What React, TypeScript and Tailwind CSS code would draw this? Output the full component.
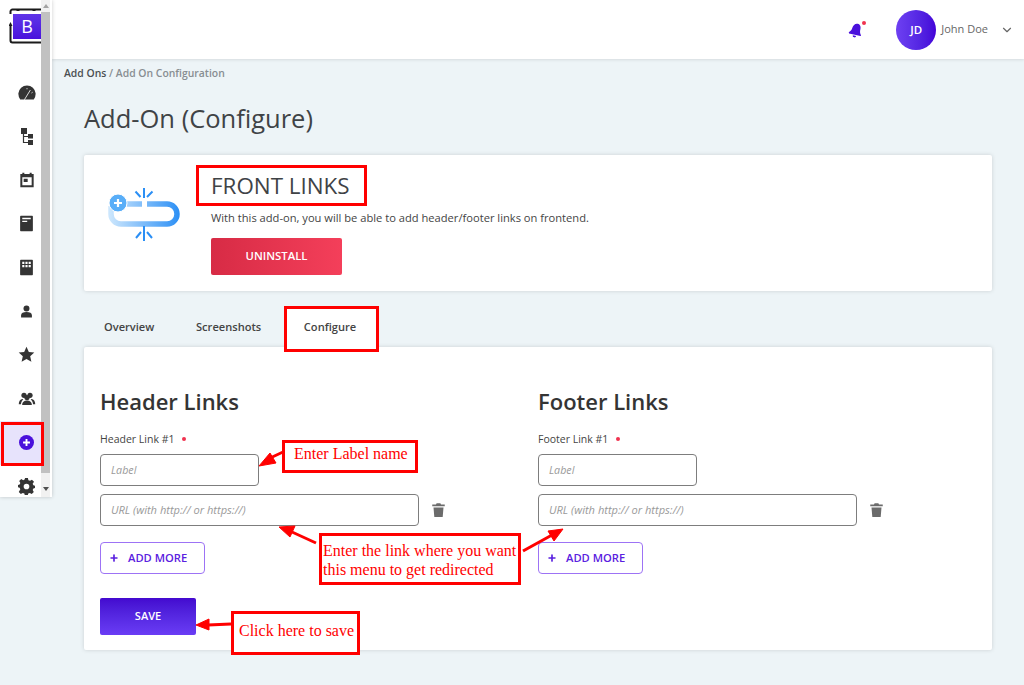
import { ChevronDown, Plus } from "lucide-react";
import { ReactNode } from "react";

const font = { fontFamily: '"Open Sans", sans-serif' };

function G({ children, size = 16, vb = "0 0 24 24", color = "#343434" }: { children: ReactNode; size?: number; vb?: string; color?: string }) {
  return (
    <svg width={size} height={size} viewBox={vb} fill={color}>
      {children}
    </svg>
  );
}

const navIcons: ReactNode[] = [
  <G size={18}>
    <path d="M3 20.500a11.500 11.500 0 1 1 18 0z" />
    <path d="M8.500 21L16.500 8M12 5.500V7M19.500 11l-1.500 1" stroke="#fff" strokeWidth="1.100" fill="none" />
  </G>,
  <svg width="12" height="17" viewBox="0 0 12 17" fill="#343434">
    <rect x="0" y="0" width="6" height="6" />
    <rect x="7" y="6" width="5" height="4.500" />
    <rect x="7" y="12" width="5" height="5" />
    <path d="M2.500 6v8.500h5M2.500 8.500h5" stroke="#343434" strokeWidth="1.200" fill="none" />
  </svg>,
  <G size={16}><path d="M5 1h3v2h8V1h3v2h3v20H2V3h3zM5 8v12h14V8zm2 2h6v5H7z" /></G>,
  <G size={17}><path d="M4 1h16a1 1 0 0 1 1 1v20a1 1 0 0 1-1 1H4a1 1 0 0 1-1-1V2a1 1 0 0 1 1-1zm2 3v2h12V4zm0 4v2h7V8z" /></G>,
  <G size={17}><path d="M4 1h16a1 1 0 0 1 1 1v20a1 1 0 0 1-1 1H4a1 1 0 0 1-1-1V2a1 1 0 0 1 1-1zm2 3v3h3V4zm4.500 0v3h3V4zM15 4v3h3V4zM6 8.500v3h3v-3zm4.500 0v3h3v-3zm4.500 0v3h3v-3z" /></G>,
  <G size={13}><circle cx="12" cy="6.500" r="5.500" /><path d="M2 23v-4c0-4 4-6 10-6s10 2 10 6v4z" /></G>,
  <G size={17}><path d="M12 1l3.300 7.300 7.700.8-5.800 5.300 1.700 7.800L12 18.200 5.100 22.200l1.700-7.800L1 9.100l7.700-.8z" /></G>,
  <G size={18}><circle cx="8" cy="7" r="3.500" /><circle cx="16" cy="7" r="3.500" /><circle cx="12" cy="10" r="3.500" /><path d="M1 19c0-4 2-7 5-7l1 .5c-2 1.500-3 4-3 6.500zM23 19c0-4-2-7-5-7l-1 .5c2 1.500 3 4 3 6.500zM5.500 20c0-4 2.500-6 6.500-6s6.500 2 6.500 6z" /></G>,
];

function Box({ className }: { className: string }) {
  return <div className={"absolute border-[3px] border-[#ff0000] " + className} />;
}

function Note({ className, children }: { className: string; children: ReactNode }) {
  return (
    <div
      className={"absolute border-[3px] border-[#ff0000] bg-white text-[#ff0000] text-[16px] leading-[19px] " + className}
      style={{ fontFamily: '"Liberation Serif", serif' }}
    >
      {children}
    </div>
  );
}

function Links({ title, label }: { title: string; label: string }) {
  return (
    <div className="w-[438px] shrink-0">
      <h2 className="text-[22px] leading-[32px] font-semibold text-[#343434]">{title}</h2>
      <div className="mt-[14px] flex items-center text-[10.500px] leading-[16px] text-[#444444]">
        {label}
        <span className="ml-[8px] h-[3.500px] w-[3.500px] rounded-full bg-[#f0324f]" />
      </div>
      <div className="mt-[7px] w-[159px] h-[32px] border border-[#7d7d7d] rounded-[4px] flex items-center px-[10px] text-[10.700px] italic text-[#9a9a9a]">Label</div>
      <div className="mt-[8px] flex items-center">
        <div className="w-[318.500px] h-[32px] border border-[#7d7d7d] rounded-[4px] flex items-center px-[10px] text-[11.100px] italic text-[#9a9a9a]">URL (with http:// or https://)</div>
        <svg className="ml-[12px]" width="15" height="16" viewBox="0 0 24 24" fill="#6b6b6b">
          <path d="M9 1h6l1 2h6v3H2V3h6zM4 8h16l-1.300 15H5.300z" />
        </svg>
      </div>
      <button className="mt-[16px] w-[105px] h-[32px] border border-[#9d73f5] rounded-[4px] flex items-center pl-[8px] text-[#5a20e0] text-[11.200px] font-semibold">
        <Plus size={10} strokeWidth={4} />
        <span className="ml-[9px]">ADD MORE</span>
      </button>
    </div>
  );
}

export default function App() {
  return (
    <div className="relative flex h-[685px] w-[1024px] overflow-hidden bg-[#edf4f7]" style={font}>
      <aside className="relative z-10 flex h-[497px] w-[52px] shrink-0 bg-white pr-[2px] shadow-[0_0_4px_rgba(0,0,0,0.2)]">
        <div className="w-[41px] shrink-0 flex flex-col">
          <div className="relative ml-[9px] mt-[8px] h-[36px] w-[32px] shrink-0">
            <svg className="absolute left-0 top-0" width="32" height="36" viewBox="0 0 32 36" fill="none" stroke="#1b1b1b" strokeWidth="2">
              <path d="M1.500 6V3.500a2 2 0 0 1 2-2h28.500" />
              <path d="M1.500 17v15.500a2 2 0 0 0 2 2h28.500" />
              <path d="M9 1v2M25 1v2" strokeWidth="3" />
              <path d="M1.500 14l-2 4h4z" fill="#1b1b1b" stroke="none" />
            </svg>
            <div className="absolute left-[4px] top-[6px] flex h-[25px] w-[28px] items-center justify-center bg-gradient-to-b from-[#5f34e8] to-[#4a10dc] text-[18px] font-medium text-white">B</div>
          </div>
          <div className="mt-[27px] flex w-full flex-col">
            {navIcons.map((icon, i) => (
              <div key={i} className="flex h-[43.700px] w-full items-center justify-center pl-[12px]">{icon}</div>
            ))}
            <div className="flex h-[44px] w-full items-center justify-center pl-[12px] bg-[#e7e3fc]">
              <svg width="15" height="15" viewBox="0 0 24 24">
                <circle cx="12" cy="12" r="12" fill="#4a10dc" />
                <path d="M6.500 12h11M12 6.500v11" stroke="#fff" strokeWidth="3" />
              </svg>
            </div>
            <div className="flex h-[43px] w-full items-center justify-center pl-[12px]">
              <G size={17}><path d="M10 0h4l.7 3 2.300 1 2.700-1.600 2.900 2.900L20.700 8l1 2.300 2.300.7v3l-2.300.7-1 2.300 1.600 2.700-2.900 2.900-2.700-1.600-2.300 1-.7 3h-4l-.7-3-2.300-1-2.700 1.600-2.900-2.900L3.300 16l-1-2.300L0 13v-3l2.300-.7 1-2.300-1.600-2.700 2.900-2.900L7.300 3 9.300 2zM12 8a4 4 0 1 0 0 8 4 4 0 0 0 0-8z" /></G>
            </div>
          </div>
        </div>
        <div className="flex w-[9px] shrink-0 flex-col bg-[#f1f1f1]">
          <div className="flex h-[12px] items-center justify-center">
            <div className="border-x-[3px] border-b-[4px] border-x-transparent border-b-[#a3a3a3]" />
          </div>
          <div className="h-[461px] bg-[#c1c1c1]" />
          <div className="flex flex-1 items-center justify-center pt-[8px]">
            <div className="border-x-[3px] border-t-[4px] border-x-transparent border-t-[#505050]" />
          </div>
        </div>
      </aside>

      <div className="flex min-w-0 flex-1 flex-col">
        <header className="flex h-[59px] shrink-0 items-center justify-end bg-white shadow-[0_1px_3px_rgba(0,0,0,0.1)]">
          <div className="relative mr-[33px] mt-[1px]">
            <svg className="rotate-[15deg]" width="14" height="16" viewBox="0 0 24 24" fill="#4a10dc">
              <path d="M12 1c5 0 7 4 7 8 0 4 1 7 4 10l-1 1-20 1-1-2c3-3 4-5 4-9 0-5 3-9 7-9zM9 22h6a3 3 0 0 1-6 0z" />
            </svg>
            <div className="absolute -right-[3px] -top-[1px] h-[4px] w-[4px] rounded-full bg-[#f0324f]" />
          </div>
          <div className="flex h-[40px] w-[40px] items-center justify-center rounded-full bg-gradient-to-r from-[#6e40f2] to-[#4400d8] text-[11.500px] font-semibold text-white">JD</div>
          <div className="ml-[5px] text-[11px] text-[#666666]">John Doe</div>
          <ChevronDown size={14} className="ml-[12px] mr-[10px] text-[#666666]" />
        </header>

        <main className="min-h-0 flex-1 pl-[12px]">
          <div className="mt-[7px] text-[10.400px] leading-[14px] font-semibold text-[#888e92]">
            <span className="text-[#4a4f52]">Add Ons</span> / Add On Configuration
          </div>
          <div className="pl-[20px] pr-[32px]">
            <h1 className="mt-[20px] text-[25.500px] leading-[36px] text-[#3f4346]">Add-On (Configure)</h1>
            <section className="mt-[19px] flex h-[136px] rounded-[2px] bg-white shadow-[0_0_4px_rgba(0,0,0,0.15)]">
              <div className="w-[127px] shrink-0 pl-[24px] pt-[33px]">
                <svg width="72" height="54" viewBox="0 0 72 54" fill="none">
                  <defs>
                    <linearGradient id="lg" gradientUnits="userSpaceOnUse" x1="0" x2="72" y1="0" y2="0">
                      <stop offset="0" stopColor="#cfe8fd" />
                      <stop offset="1" stopColor="#2b8ff5" />
                    </linearGradient>
                  </defs>
                  <path d="M39 16H59a10 10 0 0 1 10 10a10 10 0 0 1-10 10H13a10 10 0 0 1-10-10v-8M19 16H34" stroke="url(#lg)" strokeWidth="5.500" />
                  <circle cx="10" cy="15" r="9" fill="#59aef8" stroke="#fff" strokeWidth="1" />
                  <path d="M6 15h8M10 11v8" stroke="#fff" strokeWidth="2.200" />
                  <path d="M36 0v10M27.500 3.500l5 5.500M44.500 3.500l-5.500 5.500M36 38v15M28 50l5-6M44 50l-5-6" stroke="#2b8ff5" strokeWidth="2" />
                </svg>
              </div>
              <div className="pt-[14px]">
                <h3 className="text-[22.400px] leading-[34px] text-[#3f4346]">FRONT LINKS</h3>
                <p className="mt-[7px] text-[11.150px] leading-[16px] text-[#444444]">With this add-on, you will be able to add header/footer links on frontend.</p>
                <button className="mt-[12px] h-[37px] w-[131px] rounded-[2px] bg-gradient-to-r from-[#d72b45] to-[#f43f5a] text-[11.300px] font-semibold text-white">UNINSTALL</button>
              </div>
            </section>
            <nav className="mt-[15px] flex h-[41px] text-[11.100px] font-semibold text-[#444444]">
              <div className="flex w-[92px] items-center pl-[20px] pt-[1px]">Overview</div>
              <div className="flex w-[108px] items-center pl-[20px] pt-[1px]">Screenshots</div>
              <div className="flex w-[94px] items-center justify-center bg-white pt-[1px] pr-[2px]">Configure</div>
            </nav>
            <section className="h-[303px] rounded-[2px] bg-white px-[16px] pt-[38px] shadow-[0_0_4px_rgba(0,0,0,0.15)]">
              <div className="flex">
                <Links title="Header Links" label="Header Link #1" />
                <Links title="Footer Links" label="Footer Link #1" />
              </div>
              <button className="mt-[24px] h-[37px] w-[96px] rounded-[2px] bg-gradient-to-b from-[#4308cf] to-[#6a3cf5] text-[11px] font-semibold text-white">SAVE</button>
            </section>
          </div>
        </main>
      </div>

      {/* Red annotations over the page */}
      <Box className="left-[1px] top-[422px] z-20 h-[44px] w-[43px]" />
      <Box className="left-[196px] top-[165px] h-[41px] w-[171px]" />
      <Box className="left-[284px] top-[306px] h-[46px] w-[95px]" />
      <Note className="left-[282px] top-[440px] h-[33px] w-[136px] pl-[9px] pt-[1px]">Enter Label name</Note>
      <Note className="left-[319px] top-[533px] h-[52px] w-[202px] pl-[1px] pt-[5px]">Enter the link where you want<br />this menu to get redirected</Note>
      <Note className="left-[231px] top-[611px] h-[44px] w-[129px] pl-[5px] pt-[7px]">Click here to save</Note>
      <svg className="absolute left-0 top-0 pointer-events-none" width="1024" height="685" fill="#ff0000" stroke="#ff0000">
        <path d="M283 452L268 459" strokeWidth="3" />
        <path d="M259 466l11-13 6 10z" />
        <path d="M316 543L292 532" strokeWidth="3" />
        <path d="M279 527l16-1-5 11z" />
        <path d="M523 551L552 535" strokeWidth="3" />
        <path d="M563 529l-9 12-6-10z" />
        <path d="M231 624L208 625" strokeWidth="3" />
        <path d="M196 625l13-6v11z" />
      </svg>
    </div>
  );
}
